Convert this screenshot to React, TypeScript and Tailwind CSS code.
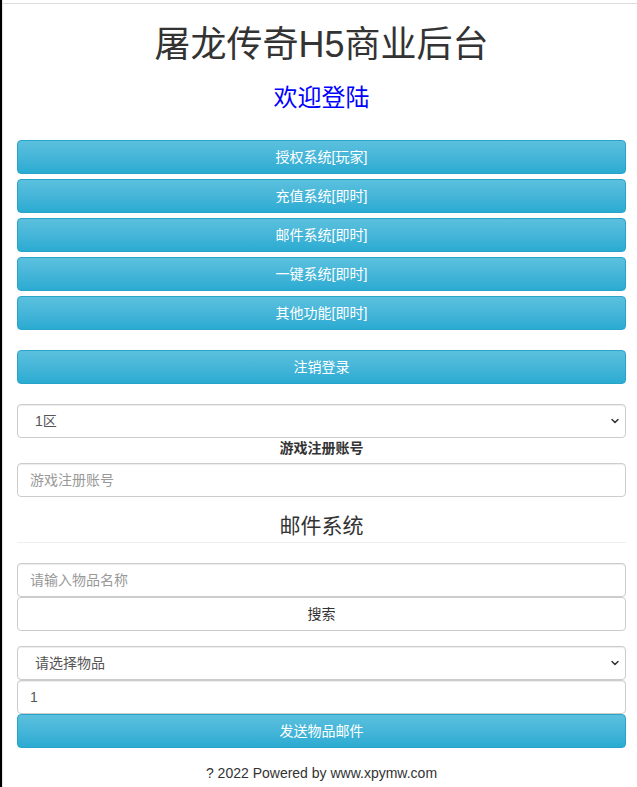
import { ChevronDown } from 'lucide-react';

const font = "font-['Liberation_Sans','Noto_Sans_CJK_SC',sans-serif]";

const infoBtn =
  'block w-full h-[34px] rounded-[4px] border border-[#28a4c9] bg-gradient-to-b from-[#5bc0de] to-[#2aabd2] text-[14px] text-white text-center leading-[20px]';

const inputCls =
  'block w-full h-[34px] rounded-[4px] border border-[#ccc] bg-white px-3 text-[14px] text-[#555] placeholder:text-[#999] shadow-[inset_0_1px_1px_rgba(0,0,0,0.075)] outline-none';

const SelectBox = ({ options }: { options: string[] }) => (
  <div className="relative">
    <select
      defaultValue={options[0]}
      className="block w-full h-[34px] appearance-none rounded-[4px] border border-[#ccc] bg-white pl-[17px] pr-8 text-[14px] text-[#555] shadow-[inset_0_1px_1px_rgba(0,0,0,0.075)] outline-none"
    >
      {options.map((o) => (
        <option key={o}>{o}</option>
      ))}
    </select>
    <ChevronDown
      className="pointer-events-none absolute right-[5px] top-[11px] h-3 w-3 text-[#333]"
      strokeWidth={3}
    />
  </div>
);

export default function App() {
  const menu = ['授权系统[玩家]', '充值系统[即时]', '邮件系统[即时]', '一键系统[即时]', '其他功能[即时]'];

  return (
    <div className={`${font} min-h-[787px] w-[637px] bg-white text-[#333] border-l-2 border-black`}>
      <div className="min-h-[787px] border-l border-[#e5e5e5]">
        <div className="h-[3px]" />
        <div className="h-px bg-[#ddd]" />
        <div className="pl-[14px] pr-[11px]">
          <h1 className="mt-[21px] text-center text-[36px] leading-[40px] text-[#333]">屠龙传奇H5商业后台</h1>
          <h2 className="mt-[19px] text-center text-[24px] leading-[28px] text-[#0000ff]">欢迎登陆</h2>

          <div className="mt-[28px] flex flex-col gap-[5px]">
            {menu.map((m) => (
              <button key={m} className={infoBtn}>
                {m}
              </button>
            ))}
          </div>

          <button className={`${infoBtn} mt-[20px]`}>注销登录</button>

          <div className="mt-[20px]">
            <SelectBox options={['1区', '2区', '3区']} />
          </div>
          <div className="text-center text-[14px] font-bold leading-[20px] text-[#333]">游戏注册账号</div>
          <input className={`${inputCls} mt-[5px]`} placeholder="游戏注册账号" />

          <h3 className="mt-[16px] border-b border-[#eee] pb-[3px] text-center text-[21px] leading-[26px] text-[#333]">
            邮件系统
          </h3>

          <input className={`${inputCls} mt-[20px]`} placeholder="请输入物品名称" />
          <button className="block w-full h-[34px] rounded-[4px] border border-[#ccc] bg-white text-center text-[14px] text-[#333]">
            搜索
          </button>

          <div className="mt-[15px]">
            <SelectBox options={['请选择物品']} />
          </div>
          <input className={inputCls} defaultValue="1" />
          <button className={infoBtn}>发送物品邮件</button>

          <p className="mt-[15px] text-center text-[14px] leading-[20px] text-[#333]">? 2022 Powered by www.xpymw.com</p>
        </div>
      </div>
    </div>
  );
}
